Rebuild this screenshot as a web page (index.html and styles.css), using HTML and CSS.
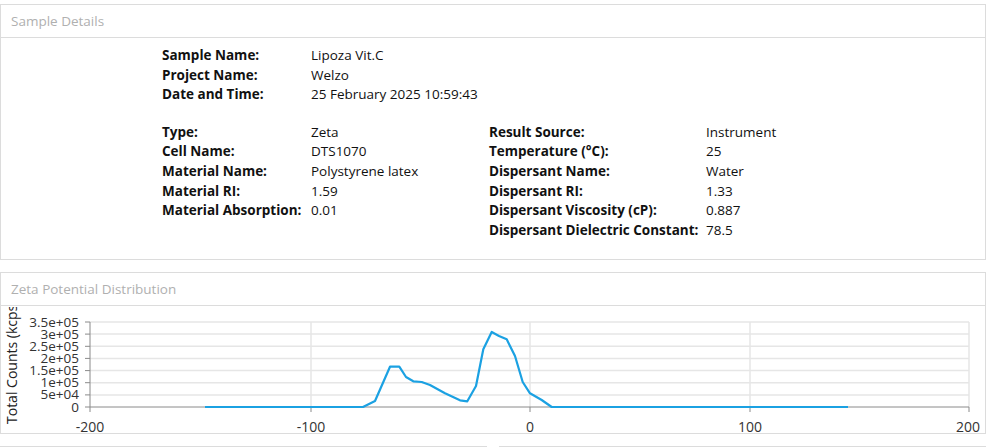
FILE: index.html
```html
<!DOCTYPE html>
<html>
<head>
<meta charset="utf-8">
<link rel="stylesheet" href="styles.css">
</head>
<body>
<div class="page">
  <section class="panel details-panel">
    <div class="panel-header">Sample Details</div>
    <div class="details">
      <div class="grid top-grid">
        <div class="lbl">Sample Name:</div><div class="val">Lipoza Vit.C</div>
        <div class="lbl">Project Name:</div><div class="val">Welzo</div>
        <div class="lbl">Date and Time:</div><div class="val">25 February 2025 10:59:43</div>
      </div>
      <div class="bottom-row">
        <div class="grid left-grid">
          <div class="lbl">Type:</div><div class="val">Zeta</div>
          <div class="lbl">Cell Name:</div><div class="val">DTS1070</div>
          <div class="lbl">Material Name:</div><div class="val">Polystyrene latex</div>
          <div class="lbl">Material RI:</div><div class="val">1.59</div>
          <div class="lbl">Material Absorption:</div><div class="val">0.01</div>
        </div>
        <div class="grid right-grid">
          <div class="lbl">Result Source:</div><div class="val">Instrument</div>
          <div class="lbl">Temperature (°C):</div><div class="val">25</div>
          <div class="lbl">Dispersant Name:</div><div class="val">Water</div>
          <div class="lbl">Dispersant RI:</div><div class="val">1.33</div>
          <div class="lbl">Dispersant Viscosity (cP):</div><div class="val">0.887</div>
          <div class="lbl">Dispersant Dielectric Constant:</div><div class="val">78.5</div>
        </div>
      </div>
    </div>
  </section>

  <section class="panel chart-panel">
    <div class="panel-header">Zeta Potential Distribution</div>
    <div class="chart-body">
      <svg class="chart" width="983" height="128" viewBox="1 305 983 128" xmlns="http://www.w3.org/2000/svg">
        <defs>
          <clipPath id="titleclip"><rect x="0" y="306" width="60" height="130"/></clipPath>
        </defs>
        <g class="grid-lines">
          <line x1="90" y1="321" x2="969" y2="321"/>
          <line x1="90" y1="333.1" x2="969" y2="333.1"/>
          <line x1="90" y1="345.3" x2="969" y2="345.3"/>
          <line x1="90" y1="357.4" x2="969" y2="357.4"/>
          <line x1="90" y1="369.6" x2="969" y2="369.6"/>
          <line x1="90" y1="381.7" x2="969" y2="381.7"/>
          <line x1="90" y1="393.9" x2="969" y2="393.9"/>
          <line x1="311" y1="321" x2="311" y2="406"/>
          <line x1="530" y1="321" x2="530" y2="406"/>
          <line x1="750" y1="321" x2="750" y2="406"/>
          <line x1="969" y1="321" x2="969" y2="406"/>
        </g>
        <g class="axis">
          <line x1="90" y1="321" x2="90" y2="406"/>
          <line x1="90" y1="406" x2="969" y2="406"/>
          <line x1="85" y1="321" x2="90" y2="321"/>
          <line x1="85" y1="333.1" x2="90" y2="333.1"/>
          <line x1="85" y1="345.3" x2="90" y2="345.3"/>
          <line x1="85" y1="357.4" x2="90" y2="357.4"/>
          <line x1="85" y1="369.6" x2="90" y2="369.6"/>
          <line x1="85" y1="381.7" x2="90" y2="381.7"/>
          <line x1="85" y1="393.9" x2="90" y2="393.9"/>
          <line x1="85" y1="406" x2="90" y2="406"/>
          <line x1="90" y1="406" x2="90" y2="411"/>
          <line x1="311" y1="406" x2="311" y2="411"/>
          <line x1="530" y1="406" x2="530" y2="411"/>
          <line x1="750" y1="406" x2="750" y2="411"/>
          <line x1="969" y1="406" x2="969" y2="411"/>
        </g>
        <g class="ylabels">
          <text x="79" y="326">3.5e+05</text>
          <text x="79" y="338">3e+05</text>
          <text x="79" y="350">2.5e+05</text>
          <text x="79" y="362">2e+05</text>
          <text x="79" y="374">1.5e+05</text>
          <text x="79" y="386">1e+05</text>
          <text x="79" y="398">5e+04</text>
          <text x="79" y="411">0</text>
        </g>
        <g class="xlabels">
          <text x="90" y="431">-200</text>
          <text x="311" y="431">-100</text>
          <text x="530" y="431">0</text>
          <text x="750" y="431">100</text>
          <text x="968" y="431">200</text>
        </g>
        <g clip-path="url(#titleclip)">
          <text class="ytitle" transform="translate(17 423) rotate(-90)">Total Counts (kcps)</text>
        </g>
        <polyline class="curve" points="205,406 363,406 375,400 390,365.7 399.3,365.7 406,376 413.3,380.3 421.7,381 430,384 445,392.3 460,399.3 467.3,400.3 476,385 483.3,348.3 491.7,331 499,335 506.7,338.3 515,355 522.7,381 530,392.3 541.7,399 551.7,406 848,406"/>
      </svg>
    </div>
  </section>

  <div class="bottom-panels">
    <section class="panel small-panel"></section>
    <section class="panel small-panel"></section>
  </div>
</div>
</body>
</html>
```

FILE: styles.css
```css
* { box-sizing: border-box; }
html, body { margin: 0; padding: 0; background: #ffffff; overflow: hidden; }
body {
  font-family: "Open Sans", "Noto Sans", sans-serif;
  font-size: 13.5px;
  color: #111;
  height: 447px;
}
.page {
  width: 986px;
  padding-top: 4px;
  display: flex;
  flex-direction: column;
  gap: 12px;
}
.panel {
  border: 1px solid #dcdcdc;
  background: #fff;
  flex-shrink: 0;
}
.panel-header {
  height: 33px;
  border-bottom: 1px solid #dcdcdc;
  padding-left: 10px;
  line-height: 32px;
  color: #b0b0b0;
  font-size: 13.5px;
}
.details-panel { height: 256px; }
.details {
  padding: 8px 0 0 161px;
}
.grid {
  display: grid;
  line-height: 19.6px;
}
.top-grid { grid-template-columns: 149px auto; }
.bottom-row {
  display: flex;
  margin-top: 18px;
}
.left-grid { grid-template-columns: 149px 178px; align-content: start; }
.right-grid { grid-template-columns: 217px auto; }
.lbl { font-weight: 700; color: #111; white-space: nowrap; }
.val { color: #111; white-space: nowrap; }

.chart-panel { height: 162px; }
.chart-body { height: 127px; }
.chart { display: block; overflow: visible; }
.grid-lines line { stroke: #e6e6e6; stroke-width: 1.5; }
.axis line { stroke: #8a8a8a; stroke-width: 1; }
.ylabels text {
  font-family: "Open Sans", "Noto Sans", sans-serif;
  font-size: 13.5px;
  fill: #333;
  text-anchor: end;
}
.xlabels text {
  font-family: "Open Sans", "Noto Sans", sans-serif;
  font-size: 14px;
  fill: #333;
  text-anchor: middle;
}
.ytitle {
  font-family: "Open Sans", "Noto Sans", sans-serif;
  font-size: 14px;
  fill: #222;
}
.curve {
  fill: none;
  stroke: #1ba1e2;
  stroke-width: 2.2;
  stroke-linejoin: round;
}
.bottom-panels {
  display: flex;
  gap: 12px;
  flex-shrink: 0;
}
.small-panel { flex: 1; height: 40px; }
```
